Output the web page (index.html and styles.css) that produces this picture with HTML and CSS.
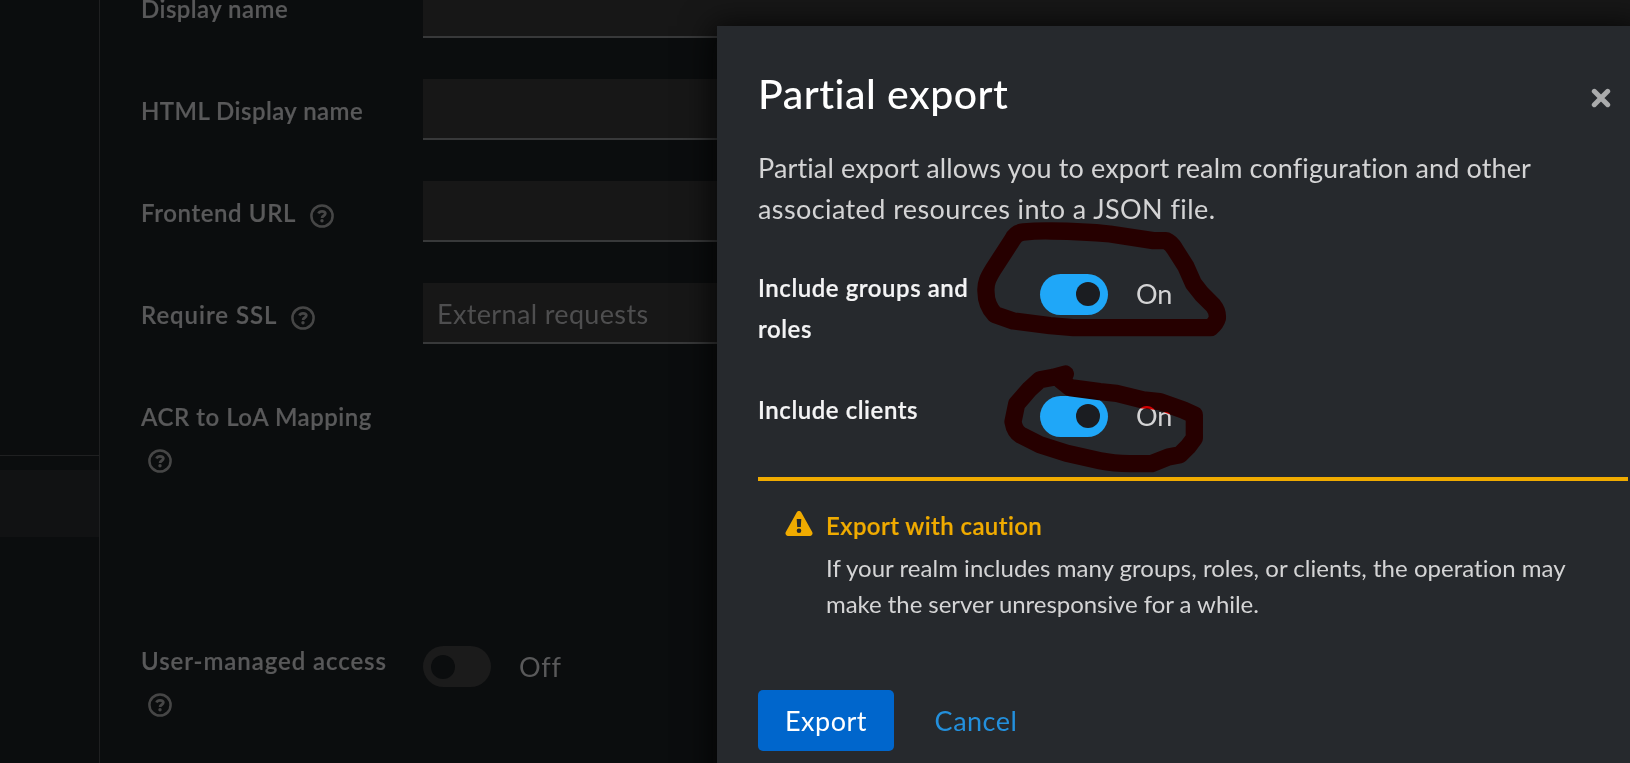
FILE: index.html
```html
<!DOCTYPE html>
<html lang="en">
<head>
<meta charset="utf-8">
<title>Partial export</title>
<link rel="stylesheet" href="styles.css">
</head>
<body>
<svg width="0" height="0" class="defs">
  <symbol id="help" viewBox="0 0 24 24">
    <circle cx="12" cy="12" r="10.6" fill="none" stroke="currentColor" stroke-width="2.5"/>
    <path d="M8.5 9.5C9.1 8 10.3 7.3 12 7.3C14 7.3 15.3 8.2 15.3 9.6C15.3 11.8 12.1 11.7 12.1 14" fill="none" stroke="currentColor" stroke-width="2.8"/>
    <circle cx="12" cy="16.8" r="1.7" fill="currentColor"/>
  </symbol>
</svg>
<div class="page">
  <nav class="sidebar">
    <div class="sidebar-group"></div>
    <div class="sidebar-current"></div>
  </nav>
  <main class="form">
    <div class="row"><label class="label t-display">Display name</label><div class="input"></div></div>
    <div class="row"><label class="label t-html">HTML Display name</label><div class="input"></div></div>
    <div class="row"><label class="label"><span class="t-frontend">Frontend URL</span> <svg class="help"><use href="#help"/></svg></label><div class="input"></div></div>
    <div class="row"><label class="label"><span class="t-ssl">Require SSL</span> <svg class="help"><use href="#help"/></svg></label><div class="input">External requests</div></div>
    <div class="row row-tall"><label class="label"><span class="t-acr">ACR to LoA Mapping</span> <svg class="help"><use href="#help"/></svg></label></div>
    <div class="row"><label class="label"><span class="t-uma">User-managed access</span> <svg class="help"><use href="#help"/></svg></label>
      <div class="switch-line"><span class="switch off"></span><span class="switch-text t-off">Off</span></div></div>
  </main>
</div>

<section class="modal">
  <header class="modal-head">
    <h1>Partial export</h1>
    <svg class="close" viewBox="0 0 20 20"><path d="M3.3 3.3L16.7 16.7M16.7 3.3L3.3 16.7"/></svg>
  </header>
  <p class="intro"><span class="t-intro1">Partial export allows you to export realm configuration and other</span><br><span class="t-intro2">associated resources into a JSON file.</span></p>
  <div class="options">
    <div class="option"><label>Include groups and<br>roles</label>
      <div class="switch-line"><span class="switch"></span><span class="switch-text">On</span></div></div>
    <div class="option"><label>Include clients</label>
      <div class="switch-line"><span class="switch"></span><span class="switch-text">On</span></div></div>
  </div>
  <div class="alert">
    <svg class="warn" viewBox="0 0 28 25"><path fill-rule="evenodd" d="M11.8 1.3C12.8-.4 15.2-.4 16.2 1.3L27.2 21C28.2 22.8 27 25 25 25H3C1 25 -.2 22.8.8 21ZM11.7 8L12.2 16H15.8L16.3 8ZM14 17.4A2.3 2.3 0 1 0 14 22A2.3 2.3 0 1 0 14 17.4Z"/></svg>
    <div><h2>Export with caution</h2>
    <p><span class="t-warn1">If your realm includes many groups, roles, or clients, the operation may</span><br><span class="t-warn2">make the server unresponsive for a while.</span></p></div>
  </div>
  <footer class="actions"><button class="primary">Export</button><button class="link">Cancel</button></footer>
</section>

<svg class="ink" viewBox="0 0 1630 763">
  <g transform="translate(740 220) scale(.33333)">
    <path d="M738 215C736 190 744 174 760 148L818 58Q828 38 850 36Q890 32 935 33Q1030 34 1110 42L1240 62H1278Q1293 68 1305 88L1338 140L1360 190L1385 222L1420 257Q1434 274 1432 295Q1428 310 1412 323H1000L930 317L820 303L765 284Q738 255 738 215Z"/>
    <path d="M976 462L940 472L900 479L868 508L830 552L819 605Q824 634 842 645L900 674L980 700L1080 722Q1120 730 1170 731H1235L1285 711L1320 704L1344 680L1363 655V585L1330 570L1260 545L1210 540L1130 520L1080 515L990 503L962 480"/>
  </g>
</svg>
</body>
</html>
```
FILE: styles.css
```css
* { box-sizing: border-box; }
body { margin: 0; width: 1630px; height: 763px; overflow: hidden; position: relative; background: #0b0d0e; font-family: Lato, "Open Sans", sans-serif; font-size: 27px; font-variant-ligatures: none; color: #d4d4d5; }
h1, h2, p { margin: 0; }
.defs { position: absolute; }
.page { display: flex; height: 763px; overflow: hidden; }
.sidebar { width: 100px; flex: none; border-right: 1px solid #1f2021; display: flex; flex-direction: column; }
.sidebar-group { height: 456px; border-bottom: 1px solid #1f2021; }
.sidebar-current { margin-top: 14px; height: 67px; background: #111213; }
.form { flex: 1; margin-top: -23px; padding-left: 41px; color: #59595a; }
.row { display: flex; height: 102px; }
.row-tall { height: 244px; }
.label { width: 282px; flex: none; padding: 12px 26px 0 0; font-size: 24px; font-weight: 600; line-height: 40.8px; }
.label, .option label, h2 { -webkit-text-stroke: .2px currentColor; }
.help { width: 24px; height: 24px; margin-left: 7px; vertical-align: -6px; color: #464646; }
.t-display { letter-spacing: .45px; }
.t-html { letter-spacing: .45px; }
.t-frontend { letter-spacing: .6px; margin-right: 1px; }
.t-ssl { letter-spacing: .95px; margin-right: 1px; }
.t-acr { letter-spacing: .52px; }
.t-uma { letter-spacing: .92px; }
.t-off { letter-spacing: .8px; }
.input { flex: 1; height: 61px; padding: 0 14px; background: #171717; border-bottom: 2px solid #38393a; line-height: 61px; letter-spacing: .35px; color: #4e4e4f; }
.switch-line { display: flex; align-items: center; gap: 28px; height: 41px; margin-top: 17px; line-height: 41px; }
.switch { width: 68px; height: 41px; border-radius: 21px; background: #1fa7f8; display: flex; align-items: center; justify-content: flex-end; padding: 0 8px; }
.switch::after { content: ""; width: 24px; height: 24px; border-radius: 50%; background: #1b1d21; }
.switch.off { background: #1b1b1b; justify-content: flex-start; }
.switch.off::after { background: #0b0d0e; }

.modal { position: absolute; left: 717px; top: 26px; width: 920px; height: 760px; padding: 0 9px 0 41px; background: #26292d; box-shadow: 0 4px 30px 4px rgba(3,3,3,.8); }
.modal-head { display: flex; justify-content: space-between; padding-top: 41px; }
h1 { font-size: 41px; line-height: 54px; font-weight: 500; letter-spacing: .5px; color: #fff; }
.close { width: 20px; height: 20px; margin: 21px 17px 0 0; fill: none; stroke: #aaabac; stroke-width: 5; stroke-linecap: round; }
.intro { margin-top: 27px; line-height: 40.8px; }
.t-intro1 { letter-spacing: .13px; }
.t-intro2 { letter-spacing: .41px; }
.options { height: 209px; margin-top: 38px; }
.option { display: flex; height: 122px; }
.option label { width: 282px; flex: none; margin-top: -1px; font-size: 24px; line-height: 41px; font-weight: 600; letter-spacing: .55px; color: #f4f4f5; }
.option .switch-line { margin-top: 6px; }
.option .switch-text { line-height: 39px; padding-bottom: 2px; }
.alert { display: flex; gap: 13px; width: 870px; border-top: 4px solid #f0ab00; padding: 27px 0 0 27px; }
.warn { width: 28px; height: 25px; flex: none; margin-top: 3px; fill: #f0ab00; }
h2 { font-size: 24px; line-height: 36px; font-weight: 600; letter-spacing: .4px; color: #f0ab00; }
.alert p { font-size: 24px; line-height: 36px; margin-top: 6px; }
.t-warn1 { letter-spacing: .03px; }
.t-warn2 { letter-spacing: -.05px; }
.actions { display: flex; margin-top: 68px; }
button { height: 61px; border: 0; border-radius: 5px; background: none; font: 27px/61px Lato, "Open Sans", sans-serif; letter-spacing: .5px; padding: 0; }
.primary { width: 136px; background: #06c; color: #fff; }
.link { width: 164px; color: #2390dd; }

.ink { position: absolute; left: 0; top: 0; width: 1630px; height: 763px; fill: none; stroke: #f00; stroke-width: 52; stroke-linecap: round; stroke-linejoin: round; mix-blend-mode: multiply; }
```
